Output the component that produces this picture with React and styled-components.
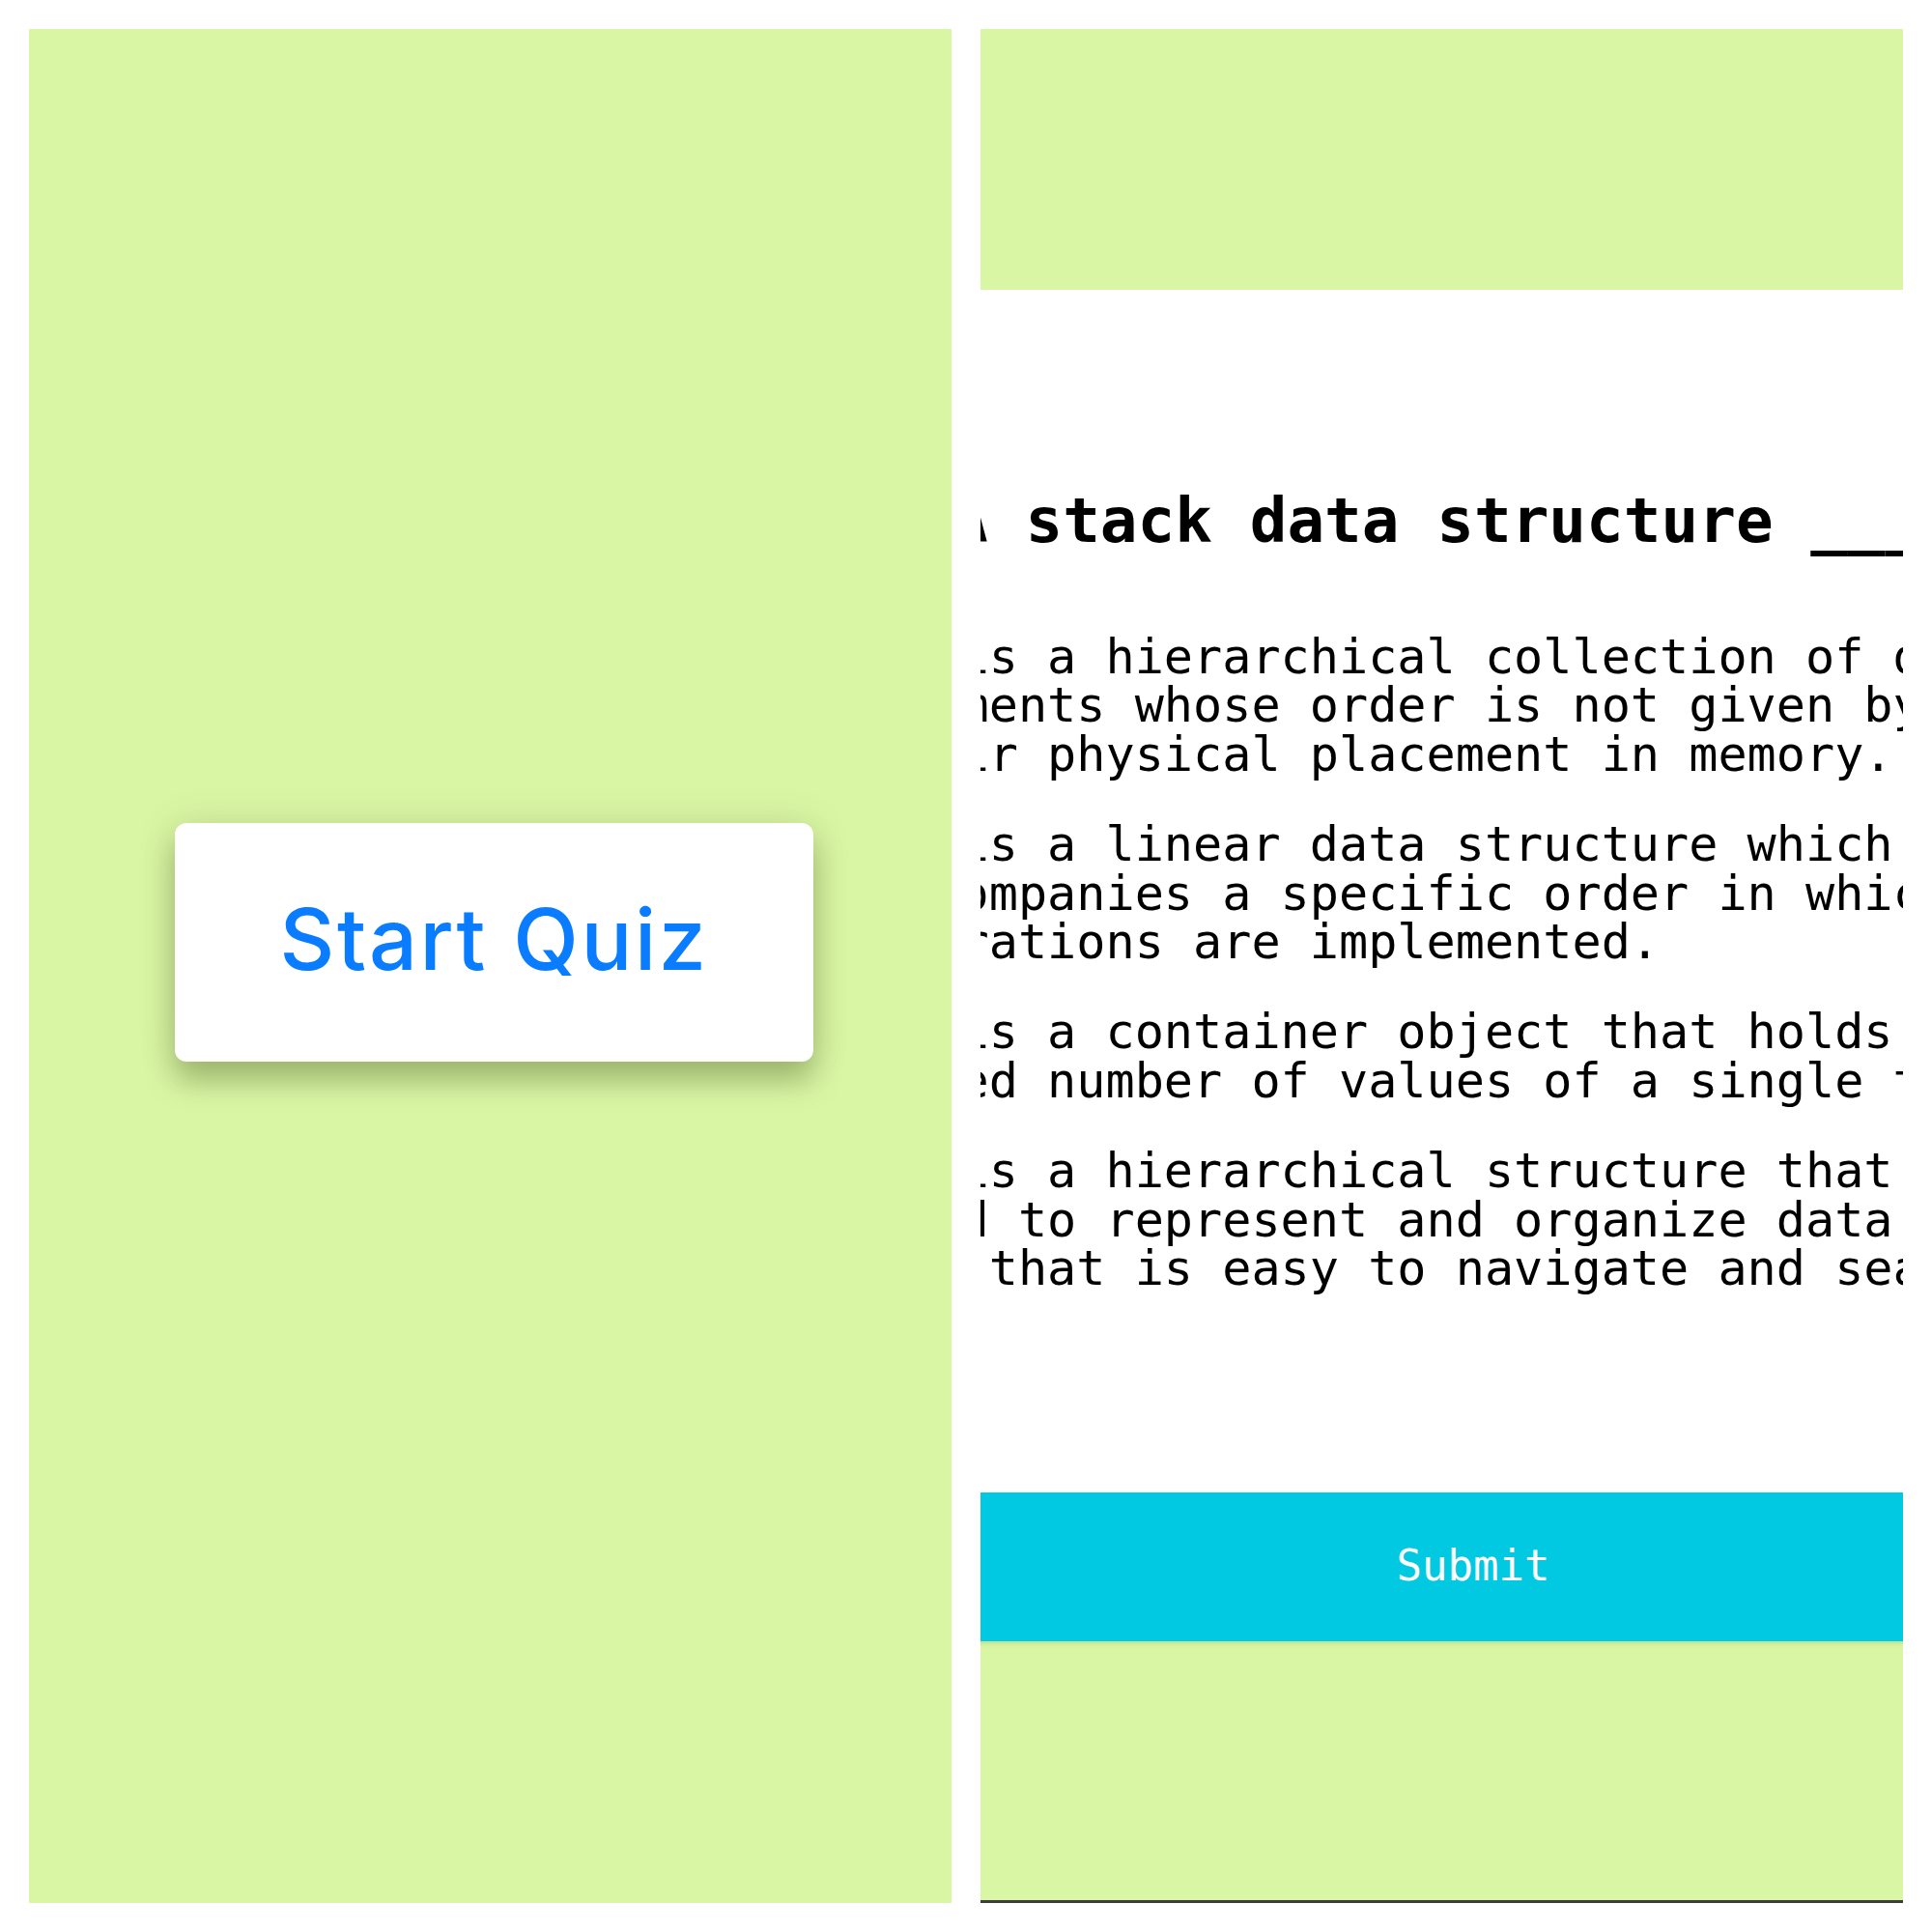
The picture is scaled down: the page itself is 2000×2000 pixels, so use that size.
import React from "react";
import styled, { createGlobalStyle } from "styled-components";

const GlobalStyle = createGlobalStyle`
  html, body {
    margin: 0;
    padding: 0;
    background: #ffffff;
  }
  * { box-sizing: border-box; }
`;

const GREEN = "#d9f6a5";

const Page = styled.div`
  display: flex;
  gap: 30px;
  padding: 30px;
  width: 2000px;
  height: 2000px;
  background: #ffffff;
`;

const Panel = styled.section`
  width: 955px;
  height: 1940px;
  background: ${GREEN};
  overflow: hidden;
  display: flex;
  flex-direction: column;
`;

const StartPanel = styled(Panel)`
  align-items: center;
  justify-content: center;
  padding-bottom: 50px;
`;

const StartCard = styled.button`
  width: 661px;
  height: 247px;
  margin-left: 8px;
  border: none;
  border-radius: 12px;
  background: #ffffff;
  box-shadow: 0 20px 30px rgba(70, 90, 30, 0.36), 0 0 40px rgba(70, 90, 30, 0.14);
  color: #0a7cff;
  font-family: "Inter", "Noto Sans", sans-serif;
  font-weight: 500;
  font-size: 88px;
  letter-spacing: 2.6px;
  cursor: pointer;
  padding: 0 0 6px;
`;

const TopBand = styled.div`
  height: 270px;
  flex: none;
`;

const Sheet = styled.div`
  height: 1245px;
  flex: none;
  background: #ffffff;
  padding-top: 207px;
`;

const Overscan = styled.div`
  width: 1240px;
  margin-left: -112px;
`;

const Question = styled.h2`
  margin: 0 0 85px;
  padding-left: 81px;
  font-family: "DejaVu Sans Mono", "Liberation Mono", monospace;
  font-weight: 700;
  font-size: 64.3px;
  line-height: 63px;
  color: #000;
  white-space: nowrap;
`;

const Options = styled.div`
  display: flex;
  flex-direction: column;
  gap: 43px;
`;

const Option = styled.p`
  margin: 0;
  font-family: "DejaVu Sans Mono", "Liberation Mono", monospace;
  font-size: 50.15px;
  line-height: 50.4px;
  color: #000;
`;

const SubmitButton = styled.button`
  flex: none;
  display: block;
  width: 1240px;
  height: 154px;
  margin-left: -110px;
  border: none;
  background: #02c9e2;
  color: #ffffff;
  font-family: "DejaVu Sans Mono", "Liberation Mono", monospace;
  font-size: 44px;
  padding: 0 0 4px;
  box-shadow: 0 2px 5px rgba(0, 0, 0, 0.12);
  cursor: pointer;
`;

const BottomBand = styled.div`
  flex: 1;
  border-bottom: 3px solid #3d3d3d;
`;

const options = [
  "It is a hierarchical collection of data elements whose order is not given by their physical placement in memory.",
  "It is a linear data structure which accompanies a specific order in which operations are implemented.",
  "It is a container object that holds a fixed number of values of a single type.",
  "It is a hierarchical structure that is used to represent and organize data in a way that is easy to navigate and search.",
];

export default function App() {
  return (
    <>
      <GlobalStyle />
      <Page>
        <StartPanel>
          <StartCard>Start Quiz</StartCard>
        </StartPanel>
        <Panel>
          <TopBand />
          <Sheet>
            <Overscan>
              <Question>A stack data structure ____</Question>
              <Options>
                {options.map((o) => (
                  <Option key={o}>{o}</Option>
                ))}
              </Options>
            </Overscan>
          </Sheet>
          <SubmitButton>Submit</SubmitButton>
          <BottomBand />
        </Panel>
      </Page>
    </>
  );
}
